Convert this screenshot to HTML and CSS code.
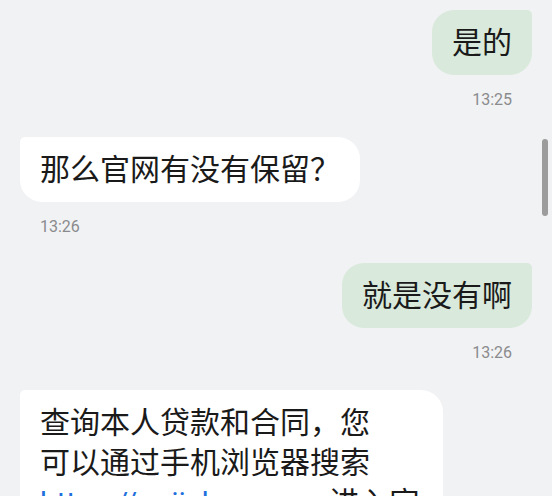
FILE: index.html
```html
<!DOCTYPE html>
<html lang="zh-CN">
<head>
<meta charset="utf-8">
<title>聊天</title>
<link rel="stylesheet" href="styles.css">
</head>
<body>
<div class="chat">
  <div class="msg sent">
    <div class="bubble">是的</div>
    <div class="time">13:25</div>
  </div>
  <div class="msg received">
    <div class="bubble">那么官网有没有保留？</div>
    <div class="time">13:26</div>
  </div>
  <div class="msg sent">
    <div class="bubble">就是没有啊</div>
    <div class="time">13:26</div>
  </div>
  <div class="msg received">
    <div class="bubble wide">查询本人贷款和合同，您<br>可以通过手机浏览器搜索<br><span class="link">https://m.jiekuans.cn</span> 进入官网查询</div>
  </div>
</div>
<div class="scrollbar"></div>
</body>
</html>
```

FILE: styles.css
```css
html, body {
  margin: 0;
  padding: 0;
}
body {
  width: 552px;
  height: 496px;
  overflow: hidden;
  background: #f1f2f4;
  font-family: Roboto, "Noto Sans CJK SC", sans-serif;
  position: relative;
}
.chat {
  padding: 10px 20px 0;
  display: flex;
  flex-direction: column;
  gap: 26.5px;
}
.msg {
  display: flex;
  flex-direction: column;
}
.msg.sent {
  align-items: flex-end;
}
.msg.received {
  align-items: flex-start;
}
.bubble {
  font-size: 30px;
  line-height: 40px;
  color: #1a1a1a;
  padding: 13px 20px 12px;
  border-radius: 22px;
  max-width: 383px;
}
.sent .bubble {
  background: #d9e9db;
  border-top-right-radius: 5px;
}
.received .bubble {
  background: #ffffff;
  border-top-left-radius: 5px;
}
.time {
  margin-top: 15px;
  font-size: 16px;
  line-height: 20px;
  color: #8a8b8d;
  padding: 0 20px;
}
.link {
  color: #1f6fdc;
}
.scrollbar {
  position: absolute;
  right: 4px;
  top: 139px;
  width: 6px;
  height: 77px;
  border-radius: 3px;
  background: #9c9c9c;
}
```
